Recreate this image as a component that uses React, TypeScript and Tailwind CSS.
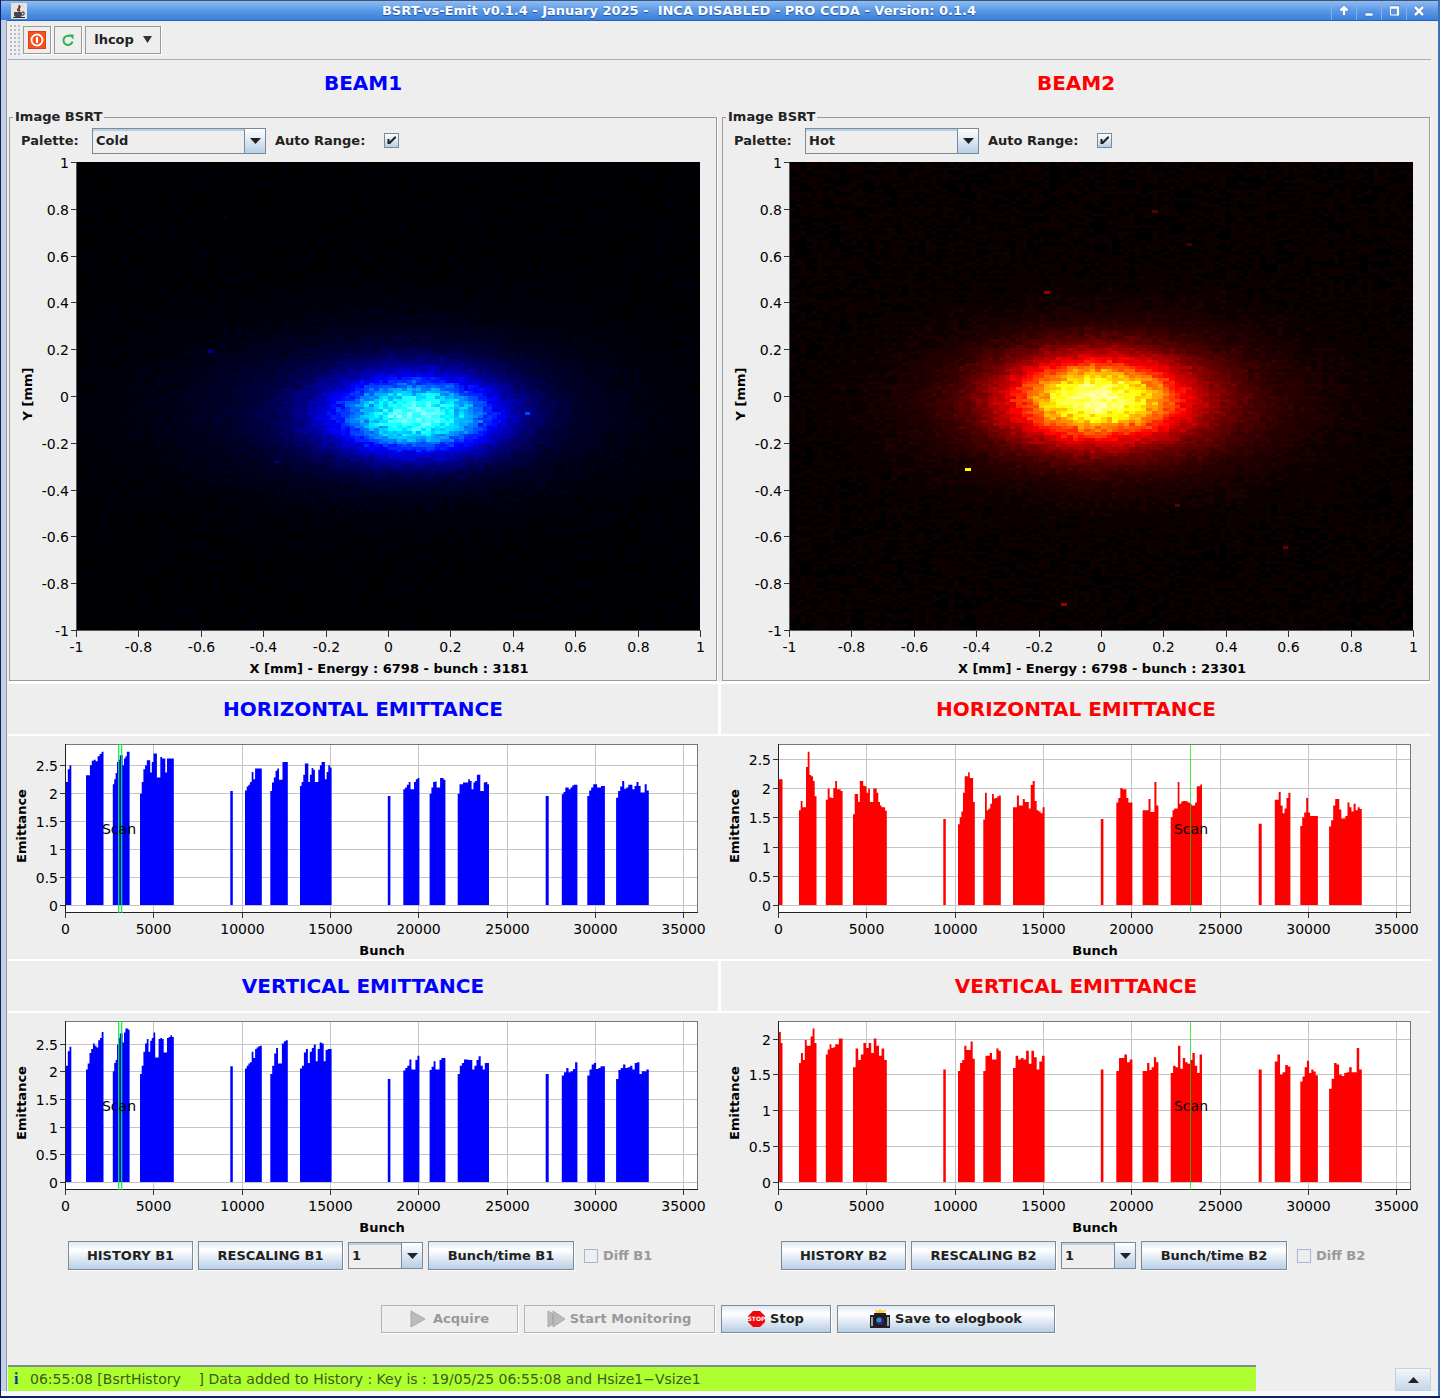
import { useId, type ReactNode } from 'react'

type Beam = 'B1' | 'B2'
type Spot = [x: number, y: number, level: number]
type Blob = { amp: number; x: number; y: number; sx: number; sy: number }

/* ---------- beam image ---------- */

const TICKS = [-1, -0.8, -0.6, -0.4, -0.2, 0, 0.2, 0.4, 0.6, 0.8, 1]
const LEVELS = 60

const IMAGES: Record<
  Beam,
  { cols: number; rows: number; seed: number; blobs: Blob[]; spots: Spot[]; floor: number; xLabel: string }
> = {
  B1: {
    cols: 132,
    rows: 174,
    seed: 11,
    floor: 0.012,
    blobs: [
      { amp: 0.68, x: 0.09, y: -0.08, sx: 0.18, sy: 0.112 },
      { amp: 0.12, x: 0.02, y: -0.06, sx: 0.4, sy: 0.21 },
    ],
    spots: [
      [-0.57, 0.19, 0.18],
      [-0.36, -0.275, 0.2],
      [0.435, -0.065, 0.42],
      [-0.53, 0.77, 0.06],
    ],
    xLabel: 'X [mm] - Energy : 6798 - bunch : 3181',
  },
  B2: {
    cols: 110,
    rows: 156,
    seed: 29,
    floor: 0.018,
    blobs: [
      { amp: 0.64, x: -0.015, y: -0.01, sx: 0.175, sy: 0.11 },
      { amp: 0.2, x: 0.03, y: -0.03, sx: 0.33, sy: 0.19 },
    ],
    spots: [
      [-0.44, -0.31, 0.66],
      [-0.19, 0.455, 0.2],
      [0.17, 0.8, 0.12],
      [0.28, 0.66, 0.08],
      [-0.12, -0.885, 0.2],
      [0.58, -0.645, 0.14],
      [0.24, -0.46, 0.12],
    ],
    xLabel: 'X [mm] - Energy : 6798 - bunch : 23301',
  },
}

function random(seed: number) {
  let s = seed
  return () => {
    s = (s + 0x6d2b79f5) | 0
    let t = Math.imul(s ^ (s >>> 15), 1 | s)
    t = (t + Math.imul(t ^ (t >>> 7), 61 | t)) ^ t
    return ((t ^ (t >>> 14)) >>> 0) / 4294967296
  }
}

function shade(beam: Beam, v: number) {
  const c = (n: number) => Math.round(255 * Math.min(1, Math.max(0, n)))
  const a = c(v * 3)
  const b = c(v * 3 - 1)
  const d = c(v * 3 - 2)
  return beam === 'B1' ? `rgb(${d},${b},${a})` : `rgb(${a},${b},${d})`
}

// one path per palette level, each pixel of the camera is a unit square
function buildLevels(beam: Beam) {
  const { cols, rows, seed, blobs, spots, floor } = IMAGES[beam]
  const rnd = random(seed)
  const paths: string[] = Array(LEVELS + 1).fill('')
  const hot = new Map<number, number>()
  spots.forEach(([x, y, level]) => {
    const col = Math.round(((x + 1) / 2) * cols)
    const row = Math.round(((1 - y) / 2) * rows)
    hot.set(row * cols + col, level)
  })
  for (let r = 0; r < rows; r++) {
    for (let c = 0; c < cols; c++) {
      const x = ((c + 0.5) / cols) * 2 - 1
      const y = 1 - ((r + 0.5) / rows) * 2
      let v = 0
      blobs.forEach((b) => {
        v += b.amp * Math.exp(-((x - b.x) ** 2) / (2 * b.sx ** 2) - (y - b.y) ** 2 / (2 * b.sy ** 2))
      })
      const noise = (rnd() + rnd() + rnd() - 1.5) / 1.5
      v += noise * 0.19 * Math.sqrt(v) * Math.sqrt(v + 0.15) + rnd() * floor
      v = hot.get(r * cols + c) ?? v
      const level = Math.min(LEVELS, Math.max(0, Math.round(v * LEVELS)))
      if (level > 0) paths[level] += `M${c} ${r}h1v1h-1z`
    }
  }
  return paths
}

const PIXELS: Record<Beam, string[]> = { B1: buildLevels('B1'), B2: buildLevels('B2') }

function BeamImage({ beam }: { beam: Beam }) {
  const { cols, rows, xLabel } = IMAGES[beam]
  return (
    <svg viewBox="0 0 706 524" className="block w-full" fontSize="14" role="img" aria-label={`Image BSRT ${beam}`}>
      <rect x="66" y="6" width="624" height="468" fill="#000" />
      <svg x="66" y="6" width="624" height="468" viewBox={`0 0 ${cols} ${rows}`} preserveAspectRatio="none">
        {PIXELS[beam].map((d, i) => d && <path key={i} d={d} fill={shade(beam, i / LEVELS)} shapeRendering="crispEdges" />)}
      </svg>
      <path d="M66.5 6V474.5H691" fill="none" stroke="#555" />
      {TICKS.map((t, i) => {
        const x = 66.5 + Math.round(i * 62.4)
        const y = 474.5 - Math.round(i * 46.8)
        return (
          <g key={t}>
            <path d={`M${x} 475v6`} stroke="#333" />
            <path d={`M61 ${y}h6`} stroke="#333" />
            <text x={x} y="496" textAnchor="middle">
              {t}
            </text>
            <text x="59" y={y + 5} textAnchor="end">
              {t}
            </text>
          </g>
        )
      })}
      <text x="379" y="517" textAnchor="middle" fontWeight="bold" fontSize="13">
        {xLabel}
      </text>
      <text transform="translate(22 238) rotate(-90)" textAnchor="middle" fontWeight="bold" fontSize="13">
        Y [mm]
      </text>
    </svg>
  )
}

/* ---------- emittance charts ---------- */

const TRAINS: [number, number][] = [
  [0, 300],
  [1130, 2120],
  [2650, 3600],
  [4190, 6100],
  [9300, 9440],
  [10130, 11080],
  [11560, 12550],
  [13240, 15030],
  [18210, 18360],
  [19090, 20000],
  [20580, 21470],
  [22170, 23940],
  [27150, 27320],
  [28060, 28940],
  [29500, 30500],
  [31130, 32980],
]

const H_B1 = [
  [2.2, 2.43, 2.5],
  [2.32, 2.32, 2.5, 2.58, 2.6, 2.57, 2.66, 2.7, 2.74],
  [2.16, 2.25, 2.36, 2.56, 2.6, 2.68, 2.68, 2.5, 2.62, 2.66, 2.74, 2.74],
  [1.99, 2.2, 2.43, 2.5, 2.59, 2.59, 2.37, 2.56, 2.71, 2.71, 2.28, 2.28, 2.65, 2.62, 2.62, 2.37, 2.62, 2.62, 2.62, 2.62],
  [2.04],
  [2.05, 2.12, 2.15, 2.2, 2.38, 2.25, 2.44, 2.44, 2.44, 2.44],
  [2.04, 2.19, 2.28, 2.4, 2.44, 2.24, 2.24, 2.56, 2.56, 2.56],
  [2.13, 2.2, 2.33, 2.53, 2.53, 2.2, 2.33, 2.45, 2.42, 2.2, 2.2, 2.42, 2.5, 2.56, 2.56, 2.25, 2.38, 2.5, 2.46],
  [1.95],
  [2.07, 2.1, 2.15, 2.2, 2.07, 2.07, 2.2, 2.25, 2.27],
  [1.99, 2.1, 2.2, 2.21, 2.1, 2.1, 2.27, 2.27, 2.24],
  [1.99, 2.16, 2.16, 2.19, 2.19, 2.19, 2.25, 2.22, 2.07, 2.19, 2.22, 2.33, 2.33, 2.04, 2.04, 2.19, 2.2, 2.16],
  [1.95],
  [1.98, 2.02, 2.1, 2.1, 2.07, 2.1, 2.14, 2.15, 2.15],
  [1.95, 2.05, 2.1, 2.16, 2.16, 2.1, 2.1, 2.13, 2.13],
  [1.92, 2.04, 2.12, 2.22, 2.08, 2.1, 2.15, 2.15, 2.07, 2.13, 2.2, 2.13, 2.01, 2.01, 2.16, 2.05],
]

const H_B2 = [
  [2.15, 2.15, 0],
  [1.62, 1.78, 1.67, 1.67, 2.36, 2.62, 2.22, 2.2, 2.12, 1.86],
  [1.8, 1.99, 1.84, 1.83, 2.0, 2.12, 1.98, 1.98, 1.95],
  [1.55, 1.9, 1.9, 1.76, 2.12, 2.12, 2.04, 2.03, 1.92, 1.99, 1.76, 1.76, 1.99, 1.99, 1.92, 1.76, 1.7, 1.67, 1.67, 1.61],
  [1.47],
  [1.38, 1.5, 1.6, 1.92, 2.2, 2.2, 2.27, 2.17, 2.17, 1.76],
  [1.46, 1.92, 1.62, 1.65, 1.73, 1.9, 1.82, 1.83, 1.86, 1.87],
  [1.67, 1.67, 1.87, 1.7, 1.7, 1.81, 1.76, 1.76, 1.65, 2.05, 2.12, 1.78, 1.62, 1.6, 1.57, 1.67],
  [1.47],
  [1.75, 1.83, 2.0, 1.98, 1.98, 1.83, 1.75, 1.75],
  [1.62, 1.62, 1.62, 1.81, 1.59, 1.59, 2.1, 1.7],
  [1.5, 1.62, 1.65, 1.65, 2.1, 1.73, 1.77, 1.78, 1.78, 1.77, 1.75, 1.73, 1.7, 1.7, 1.75, 2.03, 2.03, 2.06],
  [1.39],
  [1.8, 1.8, 1.93, 1.7, 1.57, 1.65, 1.83, 1.92],
  [1.35, 1.5, 1.58, 1.83, 1.58, 1.52, 1.52, 1.52, 1.52],
  [1.34, 1.45, 1.7, 1.81, 1.81, 1.63, 1.48, 1.48, 1.52, 1.75, 1.67, 1.6, 1.73, 1.62, 1.67, 1.64],
]

const V_B1 = [
  [2.1, 2.36, 2.44],
  [2.03, 2.14, 2.33, 2.4, 2.5, 2.46, 2.43, 2.56, 2.6, 2.71],
  [2.0, 2.15, 2.2, 2.48, 2.6, 2.68, 2.68, 2.52, 2.7, 2.77, 2.77, 2.75],
  [1.95, 2.1, 2.35, 2.5, 2.58, 2.35, 2.55, 2.6, 2.7, 2.25, 2.25, 2.58, 2.6, 2.58, 2.34, 2.34, 2.6, 2.62, 2.65, 2.62],
  [2.09],
  [2.05, 2.1, 2.14, 2.16, 2.35, 2.24, 2.4, 2.43, 2.45, 2.46],
  [1.95, 2.1, 2.32, 2.42, 2.14, 2.14, 2.5, 2.54, 2.56],
  [2.05, 2.1, 2.34, 2.4, 2.15, 2.35, 2.42, 2.48, 2.18, 2.4, 2.52, 2.5, 2.18, 2.38, 2.4, 2.4],
  [1.86],
  [2.01, 2.06, 2.1, 2.21, 2.03, 2.03, 2.2, 2.28],
  [2.02, 2.08, 2.18, 2.03, 2.03, 2.2, 2.24, 2.24],
  [1.95, 2.1, 2.15, 2.21, 2.21, 2.2, 2.2, 2.03, 2.1, 2.2, 2.27, 2.1, 2.03, 2.15, 2.15],
  [1.95],
  [1.92, 1.98, 2.06, 1.98, 2.0, 2.04, 2.16],
  [1.92, 2.03, 2.12, 2.15, 2.04, 2.06, 2.09, 2.09],
  [1.86, 2.02, 2.06, 2.12, 2.06, 2.07, 2.1, 2.03, 2.15, 2.16, 1.95, 2.0, 2.0, 2.03],
]

const V_B2 = [
  [2.09, 1.94, 0],
  [1.66, 1.8, 1.7, 1.98, 1.9, 1.9, 2.03, 2.14, 1.94],
  [1.78, 1.85, 1.92, 1.87, 1.88, 1.92, 1.92, 2.0, 2.0],
  [1.6, 1.86, 1.7, 1.78, 1.94, 1.87, 1.94, 1.8, 2.0, 1.9, 1.76, 1.86, 1.7],
  [1.57],
  [1.55, 1.66, 1.7, 1.9, 1.84, 1.84, 1.96, 1.72],
  [1.55, 1.76, 1.76, 1.8, 1.71, 1.71, 1.86, 1.83],
  [1.59, 1.76, 1.71, 1.73, 1.71, 1.83, 1.65, 1.83, 1.74, 1.57, 1.68, 1.76],
  [1.57],
  [1.55, 1.73, 1.73, 1.78, 1.67, 1.71],
  [1.55, 1.55, 1.66, 1.56, 1.6, 1.74, 1.67],
  [1.52, 1.62, 1.6, 1.9, 1.58, 1.73, 1.67, 1.65, 1.7, 1.8, 1.62, 1.52, 1.78],
  [1.57],
  [1.68, 1.78, 1.5, 1.53, 1.63, 1.61],
  [1.4, 1.47, 1.6, 1.69, 1.52, 1.57, 1.54, 1.49],
  [1.3, 1.44, 1.66, 1.64, 1.5, 1.48, 1.52, 1.53, 1.6, 1.53, 1.53, 1.87, 1.57],
]

type EmittanceProps = {
  beam: Beam
  name: string
  trains: number[][]
  unit: number // pixels per emittance unit
  ticks: number[]
}

function EmittanceChart({ beam, name, trains, unit, ticks }: EmittanceProps) {
  const px = (bunch: number) => 58 + bunch * 0.01767
  const py = (v: number) => 169 - v * unit
  const scans = beam === 'B1' ? [2970, 3150] : [23301]
  const scanX = Math.round(px(scans[0])) + (beam === 'B1' ? 1 : 0)

  const bars = trains
    .map((values, i) => {
      const [from, to] = TRAINS[i]
      const step = (to - from) / values.length
      const top = values.map((v, k) => `V${py(v).toFixed(1)}H${px(from + step * (k + 1)).toFixed(1)}`).join('')
      return `M${px(from).toFixed(1)} 169${top}V169z`
    })
    .join('')

  return (
    <svg viewBox="0 0 710 223" className="block w-full" fontSize="14" role="img" aria-label={`${name} ${beam}`}>
      <rect x="57.5" y="8.5" width="632" height="168" fill="#fff" stroke="#777" />
      {[0, 1, 2, 3, 4, 5, 6, 7].map((i) => {
        const x = Math.round(px(i * 5000)) - 0.5
        return (
          <g key={i}>
            {i > 0 && <path d={`M${x} 9v168`} stroke="#c4c4c4" />}
            <path d={`M${x} 177v5`} stroke="#333" />
            <text x={x} y="198" textAnchor="middle">
              {i * 5000}
            </text>
          </g>
        )
      })}
      {ticks.map((t) => {
        const y = Math.round(py(t)) + 0.5
        return (
          <g key={t}>
            <path d={`M58 ${y}h631`} stroke="#c4c4c4" />
            <path d={`M52 ${y}h6`} stroke="#333" />
            <text x="50" y={y + 5} textAnchor="end">
              {t}
            </text>
          </g>
        )
      })}
      <path d={bars} fill={beam === 'B1' ? '#00f' : '#f00'} />
      <path d="M57.5 8V176.5H690" fill="none" stroke="#222" />
      {scans.map((s) => (
        <rect
          key={s}
          x={Math.floor(px(s))}
          y="8"
          width={beam === 'B1' ? 1.3 : 1}
          height="169"
          fill={beam === 'B1' ? '#00f03c' : '#00e000'}
          fillOpacity={beam === 'B1' ? 0.9 : 0.7}
        />
      ))}
      <text x={scanX} y="98" textAnchor="middle">
        Scan
      </text>
      <text x="374" y="219" textAnchor="middle" fontWeight="bold" fontSize="13">
        Bunch
      </text>
      <text transform="translate(18 90) rotate(-90)" textAnchor="middle" fontWeight="bold" fontSize="13">
        Emittance
      </text>
    </svg>
  )
}

/* ---------- widgets ---------- */

function MetalButton({ className = '', disabled, children }: { className?: string; disabled?: boolean; children: ReactNode }) {
  const look = disabled
    ? 'border-[#b4b4b4] text-[#999]'
    : 'border-[#7a8a99] bg-linear-to-b from-[#dfe9f3] via-white via-30% to-[#b8cfe5] text-[#222]'
  return (
    <button
      type="button"
      disabled={disabled}
      className={`flex items-center justify-center gap-1 border font-bold whitespace-nowrap shadow-[1px_1px_0_#fff] ${look} ${className}`}
    >
      {children}
    </button>
  )
}

function Combo({ label, value, options, className }: { label: string; value: string; options: string[]; className: string }) {
  return (
    <span className={`relative inline-block border border-[#7a8a99] shadow-[inset_0_2px_0_#b8cfe5] ${className}`}>
      <select aria-label={label} defaultValue={value} className="block h-full w-full appearance-none bg-transparent pr-6 pl-[3px] font-bold text-[#222]">
        {options.map((o) => (
          <option key={o}>{o}</option>
        ))}
      </select>
      <span className="pointer-events-none absolute inset-y-0 right-0 flex w-[21px] items-center justify-center border-l border-[#7a8a99] bg-linear-to-b from-white to-[#b8cfe5]">
        <svg width="11" height="6" viewBox="0 0 11 6">
          <path d="M0 0h11L5.500 6z" fill="#222" />
        </svg>
      </span>
    </span>
  )
}

function BeamPanel({ beam, palette }: { beam: Beam; palette: string }) {
  const id = useId()
  return (
    <fieldset className="mx-px border border-[#9a9a9a] shadow-[1px_1px_0_#fff]">
      <legend className="ml-[3px] h-4 px-0.5 leading-4 font-bold">Image BSRT</legend>
      <div className="flex h-[31px] items-center pl-[11px] font-bold">
        <span className="w-[71px]">Palette:</span>
        <Combo label="Palette" value={palette} options={['Cold', 'Hot', 'Gray']} className="h-[26px] w-[174px]" />
        <label htmlFor={id} className="w-[118px] pl-[9px]">
          Auto Range:
        </label>
        <span className="relative flex">
          <input
            id={id}
            type="checkbox"
            defaultChecked
            className="peer size-[15px] appearance-none border border-[#7a8a99] bg-linear-to-b from-white to-[#b8cfe5]"
          />
          <svg className="pointer-events-none absolute inset-0 hidden peer-checked:block" width="15" height="15" viewBox="0 0 15 15">
            <path d="M3.500 6h2v2.500l5-5H12V5l-6 6H3.500z" fill="#222" />
          </svg>
        </span>
      </div>
      <BeamImage beam={beam} />
    </fieldset>
  )
}

function Controls({ beam }: { beam: Beam }) {
  return (
    <div className="flex items-center gap-[5px] pt-[5px] pl-[60px]">
      <MetalButton className="h-[29px] w-[125px]">HISTORY {beam}</MetalButton>
      <MetalButton className="h-[29px] w-[145px]">RESCALING {beam}</MetalButton>
      <Combo label={`Rescaling ${beam}`} value="1" options={['1', '2', '3']} className="h-[27px] w-[75px]" />
      <MetalButton className="h-[29px] w-[146px]">Bunch/time {beam}</MetalButton>
      <label className="flex items-center gap-[5px] pl-[5px] font-bold text-[#999]">
        <input type="checkbox" disabled className="size-[14px] appearance-none border border-[#a3b8cc]" />
        Diff {beam}
      </label>
    </div>
  )
}

function HeaderRow({ title }: { title: string }) {
  return (
    <div className="grid grid-cols-2 gap-[3px] bg-white py-[2px] text-center text-[20px] leading-[50px] font-bold">
      <h2 className="bg-[#eee] text-[#00f]">{title}</h2>
      <h2 className="bg-[#eee] text-[#f00]">{title}</h2>
    </div>
  )
}

/* ---------- window ---------- */

function TitleBar() {
  return (
    <header className="flex h-5 items-center border-t border-[#3d5573] bg-linear-to-b from-[#8fbcf3] via-[#5b98e6] to-[#3a7fdb] shadow-[0_1px_0_#1d62c4]">
      <svg className="ml-[10px]" width="16" height="16" viewBox="0 0 16 16">
        <rect width="16" height="16" rx="1" fill="#e6e3dc" />
        <path d="M3 9h8v3a2 2 0 0 1-2 2H5a2 2 0 0 1-2-2z" fill="#445" />
        <path d="M11 9h2v3h-2M2 14.500h12" fill="none" stroke="#333" />
        <path d="M7 8c-2-2 2-3 1-6 3 2-1 3 1 6z" fill="#d22" stroke="#522" />
      </svg>
      <h1 className="flex-1 text-center text-[13px] font-bold whitespace-pre text-white [text-shadow:0_1px_1px_#1c4f9a]">
        BSRT-vs-Emit v0.1.4 - January 2025 -  INCA DISABLED - PRO CCDA - Version: 0.1.4
      </h1>
      <div className="flex h-full pr-[7px]">
        {[
          { label: 'Shade', d: 'M8 13V5M4.500 8.500L8 5L11.500 8.500' },
          { label: 'Minimize', d: 'M4.500 12.500H11.500' },
          { label: 'Maximize', d: 'M4 5.500H12V13.500' },
          { label: 'Close', d: 'M4 5l8 8M12 5l-8 8' },
        ].map((b) => (
          <button key={b.label} type="button" aria-label={b.label} className="flex w-[25px] items-center justify-center border-l border-[#80b0ee]">
            <svg width="16" height="18" viewBox="0 0 16 18" fill="none" stroke="#fff" strokeWidth="2">
              <path d={b.d} stroke="#1d54a6" strokeOpacity=".5" strokeWidth="4" />
              <path d={b.d} strokeWidth="2.500" />
              {b.label === 'Maximize' && <path d="M4.500 6v7h7" strokeWidth="1" />}
            </svg>
          </button>
        ))}
      </div>
    </header>
  )
}

function Toolbar() {
  const box = 'flex h-[28px] items-center justify-center border border-[#999] shadow-[1px_1px_0_#fff]'
  return (
    <div className="flex h-[40px] items-center gap-[3px] border-b border-[#a3b1bf] pl-px">
      <div className="h-[32px] w-[11px] bg-[radial-gradient(#b4bcc6_30%,transparent_35%)] bg-size-[4px_4px]" />
      <button type="button" aria-label="Exit" className={`${box} w-[28px]`}>
        <svg width="18" height="18" viewBox="0 0 18 18" fill="none" stroke="#fff">
          <rect x=".5" y=".5" width="17" height="17" fill="#f4511e" stroke="#e03c10" />
          <circle cx="9" cy="9" r="5.500" strokeWidth="1.800" />
          <path d="M9 6v6" strokeWidth="2" />
        </svg>
      </button>
      <button type="button" aria-label="Refresh" className={`${box} w-[28px]`}>
        <svg width="14" height="14" viewBox="0 0 14 14">
          <path d="M11.500 8.500A4.600 4.600 0 1 1 9 3.200" fill="none" stroke="#2eaf4a" strokeWidth="2" />
          <path d="M7.500 1.500h5v5z" fill="#2eaf4a" />
        </svg>
      </button>
      <button type="button" className={`${box} w-[76px] gap-[9px] font-bold`}>
        lhcop
        <svg width="9" height="7" viewBox="0 0 9 7">
          <path d="M0 0h9L4.500 7z" fill="#333" />
        </svg>
      </button>
    </div>
  )
}

function Actions() {
  return (
    <div className="flex justify-center gap-[6px] pt-[35px] pr-1 pb-[32px]">
      <MetalButton disabled className="h-[28px] w-[137px]">
        <svg width="20" height="18" viewBox="0 0 20 18">
          <path d="M2 1l14 8-14 8z" fill="#bbb" stroke="#aaa" />
        </svg>
        Acquire
      </MetalButton>
      <MetalButton disabled className="h-[28px] w-[191px]">
        <svg width="19" height="18" viewBox="0 0 19 18">
          <path d="M1 1l5 3V1l12 8-12 8v-3l-5 3z" fill="#bbb" stroke="#aaa" />
          <path d="M6 4v10" stroke="#999" />
        </svg>
        Start Monitoring
      </MetalButton>
      <MetalButton className="h-[28px] w-[110px]">
        <svg width="19" height="18" viewBox="0 0 19 18">
          <path d="M6 1h7l5 5v6l-5 5H6l-5-5V6z" fill="#f0060c" />
          <text x="9.500" y="11" textAnchor="middle" fontSize="6" fontWeight="bold" fill="#fff">
            STOP
          </text>
        </svg>
        Stop
      </MetalButton>
      <MetalButton className="h-[28px] w-[218px]">
        <svg width="22" height="20" viewBox="0 0 22 20">
          <path d="M6 0l2 2 3-2 3 2 3-2-2 5H7z" fill="#ffd23c" />
          <path d="M1 6h4V4h12v2h4v13H1z" fill="#222" />
          <path d="M3 8v9M19 8v9" stroke="#ccc" strokeWidth="1.500" />
          <circle cx="11" cy="12" r="5" fill="#3b1d78" stroke="#111" />
          <circle cx="10" cy="11" r="2.500" fill="#19a0a8" />
        </svg>
        Save to elogbook
      </MetalButton>
    </div>
  )
}

function StatusBar() {
  return (
    <footer className="flex items-end justify-between">
      <p className="flex h-[26px] w-[1248px] items-center border-t-2 border-[#7f8c8d] bg-[#adff2f] pl-[6px] text-[14px] whitespace-pre text-[#3d5a1a]">
        <b className="w-[16px] font-[Liberation_Serif,serif] text-[16px] text-[#1230a0]">i</b>
        06:55:08 [BsrtHistory    ] Data added to History : Key is : 19/05/25 06:55:08 and Hsize1−Vsize1
      </p>
      <button
        type="button"
        aria-label="Show messages"
        className="flex h-[23px] w-[36px] items-center justify-center border border-[#c4d0dc] bg-linear-to-b from-[#f4f6f9] to-[#c4d6e8]"
      >
        <svg width="11" height="6" viewBox="0 0 11 6">
          <path d="M0 6h11L5.500 0z" fill="#222" />
        </svg>
      </button>
    </footer>
  )
}

export default function App() {
  const halves = [0, 0.5, 1, 1.5, 2]
  return (
    <div className="border-b-2 border-l border-[#0b1f66] bg-[#eee] font-['DejaVu_Sans','Liberation_Sans',sans-serif] text-[13px] text-[#222]">
      <div className="border-r-2 border-[#3f6fb5]">
        <TitleBar />
        <div className="border-l-[5px] border-[#c3d0e2] pr-[7px]">
          <main className="border-l border-[#8e9cab] pl-px">
            <Toolbar />
            <div className="grid h-[47px] grid-cols-2 gap-[3px] text-center text-[20px] leading-[47px] font-bold">
              <h2 className="text-[#00f]">BEAM1</h2>
              <h2 className="text-[#f00]">BEAM2</h2>
            </div>
            <div className="grid grid-cols-2 gap-[3px] pt-[2px] pb-px">
              <BeamPanel beam="B1" palette="Cold" />
              <BeamPanel beam="B2" palette="Hot" />
            </div>
            <HeaderRow title="HORIZONTAL EMITTANCE" />
            <div className="grid grid-cols-2 gap-[3px]">
              <EmittanceChart beam="B1" name="Horizontal emittance" trains={H_B1} unit={55.9} ticks={[...halves, 2.5]} />
              <EmittanceChart beam="B2" name="Horizontal emittance" trains={H_B2} unit={58.5} ticks={[...halves, 2.5]} />
            </div>
            <HeaderRow title="VERTICAL EMITTANCE" />
            <div className="grid grid-cols-2 gap-[3px]">
              <EmittanceChart beam="B1" name="Vertical emittance" trains={V_B1} unit={55.4} ticks={[...halves, 2.5]} />
              <EmittanceChart beam="B2" name="Vertical emittance" trains={V_B2} unit={71.7} ticks={halves} />
            </div>
            <div className="grid grid-cols-2 gap-[3px]">
              <Controls beam="B1" />
              <Controls beam="B2" />
            </div>
            <Actions />
            <StatusBar />
          </main>
        </div>
        <div className="h-[5px] bg-[#f6f8fb]" />
      </div>
    </div>
  )
}
